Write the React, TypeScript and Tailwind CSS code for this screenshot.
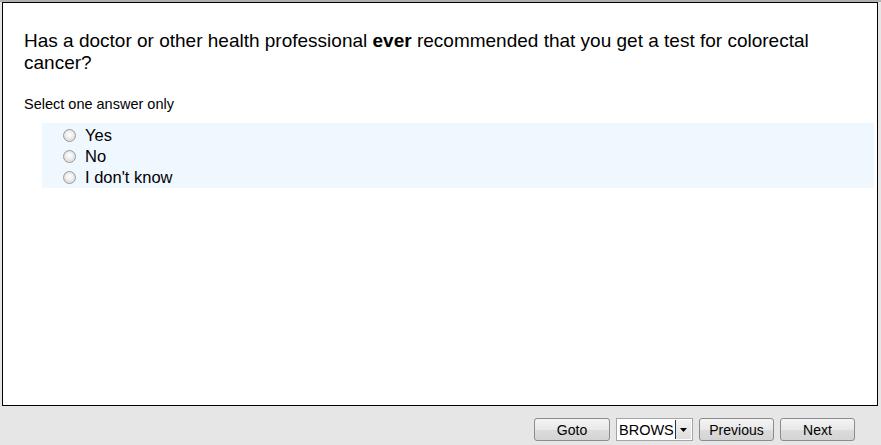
import React from 'react';

const answers = ['Yes', 'No', "I don't know"];

function Radio() {
  return (
    <span className="w-[13px] h-[13px] rounded-full border border-[#9a9a9a] bg-[radial-gradient(circle_at_50%_40%,#ffffff_0%,#eeeeee_45%,#c4c4c4_100%)] shadow-[inset_0_0_0_1px_#e4e4e4] shrink-0" />
  );
}

function NavButton({ label, width }: { label: string; width: string }) {
  return (
    <button
      className={`${width} h-[23px] rounded-[3px] border border-[#8c8c8c] bg-[linear-gradient(#f4f4f4,#e8e8e8_50%,#dcdcdc_51%,#d4d4d4)] text-[14px] leading-none text-black flex items-center justify-center`}
    >
      {label}
    </button>
  );
}

export default function App() {
  return (
    <div className="w-[881px] h-[445px] bg-[#e6e6e6] border-t-2 border-[#b0b0b0] flex flex-col font-['Liberation_Sans',Arial,sans-serif] overflow-hidden">
      {/* Question panel */}
      <div className="ml-[2px] w-[876px] h-[404px] shrink-0 border border-black bg-white pt-[27px]">
        <p className="px-[21px] text-[19px] leading-[22px] text-black">
          Has a doctor or other health professional <b>ever</b> recommended that you get a test for colorectal cancer?
        </p>
        <p className="px-[21px] mt-[22px] text-[14.5px] leading-[16px] text-black">Select one answer only</p>

        {/* Answers */}
        <div className="ml-[39px] mr-[3px] mt-[11px] h-[65px] bg-[#f0f8ff] pt-[2px] pl-[21px]">
          {answers.map((a) => (
            <div key={a} className="h-[21px] flex items-center gap-[9px]">
              <Radio />
              <span className="text-[16.5px] leading-[21px] text-black">{a}</span>
            </div>
          ))}
        </div>
      </div>

      {/* Bottom nav */}
      <div className="flex-1 flex items-start justify-end pt-[12px] pr-[26px] gap-[6px]">
        <NavButton label="Goto" width="w-[76px]" />
        <div className="w-[77px] h-[23px] border border-[#a5a5a5] bg-white flex items-stretch">
          <span className="flex-1 overflow-hidden text-[14.5px] leading-[21px] pt-[1px] pl-[2px] text-black whitespace-nowrap">BROWS</span>
          <span className="w-[16px] my-[1px] mr-[1px] border-l border-[#333] bg-[linear-gradient(#f2f2f2,#dedede)] flex items-center justify-center">
            <svg width="7" height="4" viewBox="0 0 7 4">
              <path d="M0 0h7L3.5 4z" fill="#000" />
            </svg>
          </span>
        </div>
        <NavButton label="Previous" width="w-[75px]" />
        <NavButton label="Next" width="w-[75px]" />
      </div>
    </div>
  );
}
